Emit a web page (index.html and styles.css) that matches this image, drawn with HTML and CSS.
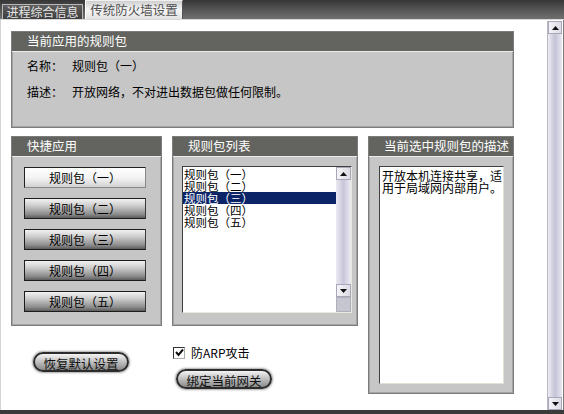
FILE: index.html
```html
<!DOCTYPE html>
<html lang="zh-CN">
<head>
    <meta charset="UTF-8">
    <title>传统防火墙设置</title>
    <link rel="stylesheet" href="styles.css">
</head>
<body>

<div class="window">
    <!-- Tabs -->
    <div class="tabbar">
        <div class="tab">进程综合信息</div>
        <div class="tab active">传统防火墙设置</div>
    </div>

    <div class="client">
        <div class="page">
            <!-- Current rule pack -->
            <div class="panel current">
                <div class="panel-title">当前应用的规则包</div>
                <div class="panel-body fields">
                    <div class="field"><span class="label">名称：</span><span>规则包（一）</span></div>
                    <div class="field"><span class="label">描述：</span><span>开放网络，不对进出数据包做任何限制。</span></div>
                </div>
            </div>

            <div class="grid">
                <!-- Quick apply -->
                <div class="panel quick">
                    <div class="panel-title">快捷应用</div>
                    <div class="quick-list">
                        <button class="qbtn on">规则包（一）</button>
                        <button class="qbtn">规则包（二）</button>
                        <button class="qbtn">规则包（三）</button>
                        <button class="qbtn">规则包（四）</button>
                        <button class="qbtn">规则包（五）</button>
                    </div>
                </div>

                <!-- Rule pack list -->
                <div class="panel packs">
                    <div class="panel-title">规则包列表</div>
                    <div class="listbox">
                        <ul class="items">
                            <li>规则包（一）</li>
                            <li>规则包（二）</li>
                            <li class="selected">规则包（三）</li>
                            <li>规则包（四）</li>
                            <li>规则包（五）</li>
                        </ul>
                        <div class="mini-scroll">
                            <div class="arrow">
                                <svg width="7" height="4" viewBox="0 0 7 4"><polygon points="0,4 7,4 3.5,0" fill="#111"/></svg>
                            </div>
                            <div class="track"></div>
                            <div class="arrow">
                                <svg width="7" height="4" viewBox="0 0 7 4"><polygon points="0,0 7,0 3.5,4" fill="#111"/></svg>
                            </div>
                            <div class="grip"></div>
                        </div>
                    </div>
                </div>

                <!-- Selected description -->
                <div class="panel desc">
                    <div class="panel-title">当前选中规则包的描述</div>
                    <div class="textbox">开放本机连接共享，适用于局域网内部用户。</div>
                </div>

                <div class="restore">
                    <button class="pill">恢复默认设置</button>
                </div>

                <div class="arp">
                    <label class="check">
                        <span class="box">
                            <svg width="9" height="9" viewBox="0 0 9 9"><polyline points="1,4 3.5,7 8,1.5" fill="none" stroke="#111" stroke-width="2"/></svg>
                        </span>
                        防ARP攻击
                    </label>
                    <button class="pill bind">绑定当前网关</button>
                </div>
            </div>
        </div>

        <!-- Page scrollbar -->
        <div class="vscroll">
            <div class="arrow">
                <svg width="7" height="4" viewBox="0 0 7 4"><polygon points="0,4 7,4 3.5,0" fill="#111"/></svg>
            </div>
            <div class="track"></div>
            <div class="arrow">
                <svg width="7" height="4" viewBox="0 0 7 4"><polygon points="0,0 7,0 3.5,4" fill="#111"/></svg>
            </div>
        </div>
    </div>
</div>

</body>
</html>
```

FILE: styles.css
```css
* {
    box-sizing: border-box;
}

body {
    margin: 0;
    font-family: "Noto Sans CJK SC", "DejaVu Sans", sans-serif;
    font-size: 12px;
    color: #000;
}

.window {
    width: 564px;
    height: 414px;
    background: #3a3a3a;
    overflow: hidden;
}

/* Tab bar */
.tabbar {
    height: 20px;
    display: flex;
    align-items: flex-end;
    padding-left: 2px;
    gap: 2px;
    background: linear-gradient(#363636, #5a5a5a 60%, #707070);
    border-bottom: 1px solid #d8d8d8;
}

.tab {
    height: 15px;
    width: 81px;
    line-height: 14px;
    text-align: center;
    color: #e6e6e6;
    background: linear-gradient(#5e5e5e, #3e3e3e);
    border: 1px solid #b8b8b8;
    border-bottom: none;
    font-size: 12px;
}

.tab.active {
    height: 19px;
    width: 98px;
    line-height: 17px;
    color: #505050;
    background: linear-gradient(#cfcfcf, #f6f6f6 50%, #e2e2e2);
    border-color: #f0f0f0 #555 #fff #fff;
    font-size: 12.5px;
}

/* Client area */
.client {
    height: 390px;
    display: flex;
    background: #fff;
    border-left: 1px solid #d4d4d4;
    border-right: 1px solid #7a7a7a;
}

.page {
    width: 546px;
    padding: 11px 0 0 10px;
}

/* Group panels */
.panel {
    background: #c6c6c6;
    border: 1px solid #7c7c7c;
    box-shadow: inset 0 0 0 1px #a4a4a4;
}

.panel-title {
    height: 20px;
    line-height: 18px;
    padding-left: 15px;
    color: #fff;
    font-size: 12.5px;
    background: #636460;
    border-bottom: 1px solid #ececec;
}

.current {
    width: 503px;
    height: 97px;
}

.fields {
    padding: 8px 0 0 15px;
}

.field {
    display: flex;
    line-height: 12px;
    margin-bottom: 14px;
}

.label {
    width: 45px;
}

.grid {
    margin-top: 8px;
    display: grid;
    grid-template-columns: 151px 186px 146px;
    grid-template-rows: 190px auto;
    column-gap: 10px;
}

.quick {
    grid-column: 1;
    grid-row: 1;
}

.packs {
    grid-column: 2;
    grid-row: 1;
}

.desc {
    grid-column: 3;
    grid-row: 1 / span 2;
    height: 258px;
}

.restore {
    grid-column: 1;
    grid-row: 2;
}

.arp {
    grid-column: 2;
    grid-row: 2;
}

/* Quick apply buttons */
.quick-list {
    display: flex;
    flex-direction: column;
    gap: 10px;
    padding: 10px 0 0 12px;
}

.qbtn {
    width: 122px;
    height: 21px;
    padding: 0;
    font-family: inherit;
    font-size: 12px;
    color: #000;
    border: 1px solid #1c1c1c;
    border-right-color: #3a3a3a;
    background: linear-gradient(#f2f2f2, #cdcdcd 35%, #8c8c8c 80%, #5c5c5c);
}

.qbtn.on {
    background: linear-gradient(#ffffff, #f4f4f4 50%, #d2d2d2);
    border-color: #222 #888 #888 #222;
}

/* List box */
.listbox {
    margin: 9px 0 0 9px;
    width: 170px;
    height: 147px;
    display: flex;
    background: #fff;
    border-top: 1px solid #404040;
    border-left: 1px solid #404040;
    border-right: 1px solid #e8e8e0;
    border-bottom: 1px solid #e8e8e0;
}

.items {
    flex: 1;
    list-style: none;
    margin: 0;
    padding: 1px 0 0;
}

.items li {
    height: 12px;
    line-height: 12px;
    font-size: 11.5px;
    padding-left: 1px;
}

.items li.selected {
    background: #0b2468;
    color: #fff;
}

.mini-scroll {
    width: 15px;
    display: flex;
    flex-direction: column;
    background: linear-gradient(90deg, #ecebf3, #c8c6d8 50%, #ecebf3);
}

.mini-scroll .arrow,
.vscroll .arrow {
    height: 13px;
    display: flex;
    align-items: center;
    justify-content: center;
    background: linear-gradient(90deg, #f4f4f8, #dcdbe6);
    border: 1px solid #a8a8b8;
}

.mini-scroll .track,
.vscroll .track {
    flex: 1;
}

.mini-scroll .grip {
    height: 15px;
    background: #c6c6d0;
    border: 1px solid #b0b0bc;
}

/* Description text box */
.textbox {
    margin: 9px 0 0 10px;
    width: 125px;
    height: 218px;
    padding: 3px 0 0 2px;
    line-height: 12px;
    background: #fff;
    border-top: 1px solid #404040;
    border-left: 1px solid #404040;
    border-right: 1px solid #e0e0d6;
    border-bottom: 1px solid #e0e0d6;
}

/* Bottom controls */
.restore {
    padding: 26px 0 0 22px;
}

.pill {
    width: 96px;
    height: 20px;
    padding: 0;
    font-family: inherit;
    font-size: 12.5px;
    color: #111;
    border: 2px solid #2c2c2c;
    border-radius: 10px;
    background: linear-gradient(#f4f4f4, #c4c4c4 45%, #8a8a8a);
    box-shadow: 0 0 2px 1px rgba(0, 0, 0, 0.35);
}

.arp {
    padding: 20px 0 0 1px;
}

.check {
    display: flex;
    align-items: center;
    gap: 6px;
    height: 13px;
    line-height: 13px;
}

.box {
    width: 12px;
    height: 12px;
    display: flex;
    align-items: center;
    justify-content: center;
    background: #fff;
    border: 1px solid #333;
    border-right-color: #aaa;
    border-bottom-color: #aaa;
}

.bind {
    margin: 10px 0 0 3px;
}

/* Page scrollbar */
.vscroll {
    width: 15px;
    margin: 1px 1px 0 0;
    display: flex;
    flex-direction: column;
    background: linear-gradient(90deg, #eeedf4, #c4c2d6 50%, #e8e7f0);
    border-left: 1px solid #b8b8c4;
}
```
